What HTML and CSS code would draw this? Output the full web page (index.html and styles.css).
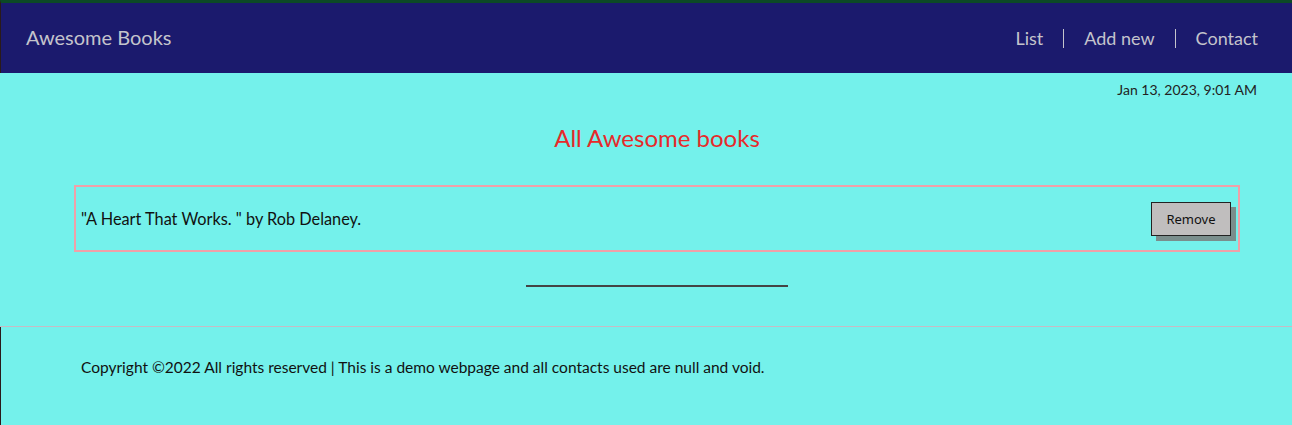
FILE: index.html
```html
<!DOCTYPE html>
<html lang="en">
<head>
<meta charset="utf-8">
<title>Awesome Books</title>
<link rel="stylesheet" href="styles.css">
</head>
<body>
<header class="header">
  <a class="brand" href="#">Awesome Books</a>
  <nav class="nav">
    <a class="nav-link" href="#">List</a>
    <a class="nav-link" href="#">Add new</a>
    <a class="nav-link" href="#">Contact</a>
  </nav>
</header>
<main class="main">
  <p class="date">Jan 13, 2023, 9:01 AM</p>
  <h1 class="title">All Awesome books</h1>
  <ul class="books">
    <li class="book">
      <span class="book-text">"A Heart That Works. " by Rob Delaney.</span>
      <button class="remove">Remove</button>
    </li>
  </ul>
  <div class="divider"></div>
</main>
<footer class="footer">
  <p class="copy">Copyright ©2022 All rights reserved | This is a demo webpage and all contacts used are null and void.</p>
</footer>
</body>
</html>
```
FILE: styles.css
```css
* { box-sizing: border-box; }
html, body { margin: 0; padding: 0; }
body {
  background: #74f1eb;
  font-family: "Lato", "Noto Sans", sans-serif;
  color: #111;
  height: 425px;
  overflow: hidden;
}
.header {
  height: 73px;
  background: #1b1a6d;
  border-top: 3px solid #0c4a26;
  border-left: 1px solid #2a1a1a;
  display: flex;
  align-items: center;
  justify-content: space-between;
  padding: 0 34px 0 25px;
}
.brand {
  color: #c4c4cc;
  text-decoration: none;
  font-size: 20px;
  padding-bottom: 2px;
}
.nav { display: flex; align-items: center; }
.nav-link {
  color: #c4c4cc;
  text-decoration: none;
  font-size: 18px;
  padding: 0 20px;
  line-height: 19px;
  border-left: 1px solid #c4c4cc;
}
.nav-link:first-child { border-left: none; }
.nav-link:last-child { padding-right: 0; }
.main {
  display: flex;
  flex-direction: column;
  align-items: center;
  padding: 8px 52px 0 74px;
  height: 254px;
  border-bottom: 1px solid #c6bcc4;
}
.date {
  align-self: flex-end;
  margin: 0 -17px 0 0;
  font-size: 14px;
  color: #222;
}
.title {
  margin: 25px 0 0;
  font-weight: normal;
  font-size: 24px;
  color: #e62a2a;
}
.books {
  list-style: none;
  margin: 33px 0 0;
  padding: 0;
  width: 100%;
}
.book {
  display: flex;
  align-items: center;
  justify-content: space-between;
  border: 2px solid #f0a0a8;
  height: 67px;
  padding: 0 7px 0 5px;
  font-size: 16.3px;
}
.remove {
  font-family: "Noto Sans", sans-serif;
  font-size: 13px;
  background: #c0bebe;
  border: 1px solid #222;
  width: 80px;
  height: 34px;
  padding: 0;
  color: #111;
  box-shadow: 5px 5px 0 #7a8e8c;
}
.divider {
  margin-top: 33px;
  width: 262px;
  height: 2px;
  background: #444;
}
.footer {
  border-left: 1px solid #2a1a1a;
  padding: 31px 80px;
  height: 98px;
}
.copy { margin: 0; font-size: 15.5px; color: #111; }
```
